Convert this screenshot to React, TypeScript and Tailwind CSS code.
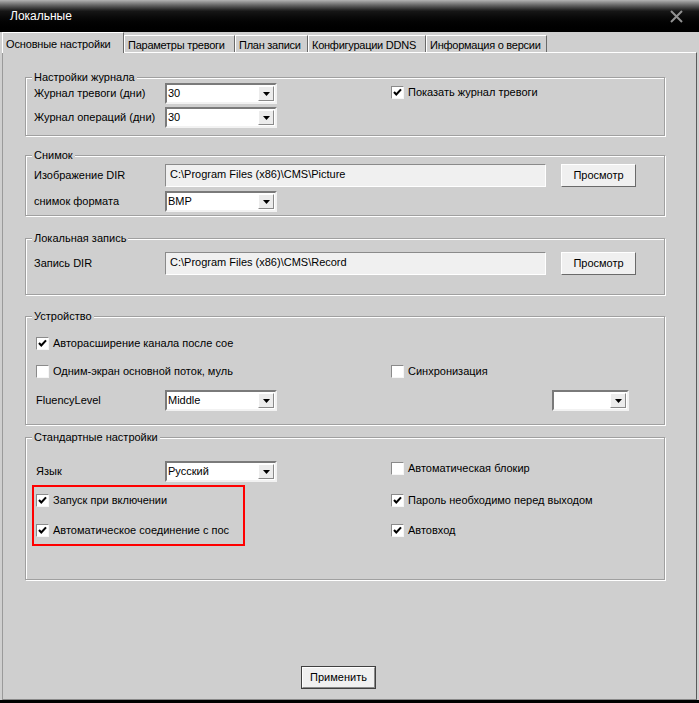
import React from 'react';

const ETCH = 'border border-[#a0a0a0] shadow-[1px_1px_0_#ffffff,inset_1px_1px_0_#ffffff]';

const Check = ({ checked, label }: { checked?: boolean; label: string }) => (
  <div className="flex items-center h-[20px]">
    <span className="w-[13px] h-[13px] shrink-0 bg-white border border-t-[#8a8a8a] border-l-[#8a8a8a] border-r-[#f6f6f6] border-b-[#f6f6f6] flex items-center justify-center">
      {checked && (
        <svg width="9" height="9" viewBox="0 0 9 9">
          <path d="M1 4 L3.3 6.5 L8 1.4" stroke="#000" strokeWidth="2.1" fill="none" />
        </svg>
      )}
    </span>
    <span className="ml-[4px] whitespace-nowrap">{label}</span>
  </div>
);

const Combo = ({ value, w = 'w-[112px]' }: { value?: string; w?: string }) => (
  <div className={`${w} h-[21px] bg-white border-2 border-t-[#7a7a7a] border-l-[#7a7a7a] border-r-[#f2f2f2] border-b-[#f2f2f2] flex items-center`}>
    <span className="flex-1 pl-[1px] text-black">{value}</span>
    <span className="w-[16px] h-[15px] mr-[1px] bg-[#ececec] border border-t-white border-l-white border-r-[#8a8a8a] border-b-[#8a8a8a] flex items-center justify-center">
      <svg width="7" height="4" viewBox="0 0 7 4">
        <path d="M0 0 H7 L3.5 4 Z" fill="#000" />
      </svg>
    </span>
  </div>
);

const PathBox = ({ value }: { value: string }) => (
  <div className="w-[381px] h-[23px] bg-[#f0f0f0] border border-t-[#8a8a8a] border-l-[#8a8a8a] border-r-white border-b-white flex items-center pl-[4px] pb-[3px]">
    {value}
  </div>
);

const Btn = ({ label }: { label: string }) => (
  <div className="w-[75px] h-[23px] bg-[#f0f0f0] border border-t-white border-l-white border-r-[#6a6a6a] border-b-[#6a6a6a] flex items-center justify-center">
    {label}
  </div>
);

const Group = ({ title, mt, pad, children }: { title: string; mt: string; pad: string; children: React.ReactNode }) => (
  <fieldset className={`w-[640px] ${ETCH} ${mt}`}>
    <legend className="ml-[6px] px-[2px] leading-[12px] bg-[#cfcfcf]">{title}</legend>
    <div className={pad}>{children}</div>
  </fieldset>
);

const tabs = [
  { label: 'Параметры тревоги', w: 'w-[111px]' },
  { label: 'План записи', w: 'w-[73px]' },
  { label: 'Конфигурации DDNS', w: 'w-[118px]' },
  { label: 'Информация о версии', w: 'w-[121px]' },
];

export default function App() {
  return (
    <div className="w-[699px] h-[703px] bg-black flex flex-col font-['Liberation_Sans',Arial,sans-serif] text-[11px] text-black">
      <div className="h-[32px] shrink-0 flex items-center justify-between pl-[10px] pr-[16px] bg-gradient-to-b from-[#b4b4b4] via-[#161616] via-35% to-black">
        <span className="text-white text-[12px]">Локальные</span>
        <svg width="13" height="13" viewBox="0 0 13 13">
          <path d="M1 1 L12 12 M12 1 L1 12" stroke="#929292" strokeWidth="2" />
        </svg>
      </div>

      <div className="h-[668px] bg-[#cfcfcf] px-[2px] flex flex-col">
        <div className="h-[20px] flex items-end">
          <div className="relative z-10 w-[122px] h-[21px] -mb-[1px] bg-[#cfcfcf] border-t border-l border-white border-r border-r-[#6a6a6a] pl-[3px] pt-[5px] leading-[12px] tracking-[-0.15px] whitespace-nowrap">
            Основные настройки
          </div>
          {tabs.map((t) => (
            <div
              key={t.label}
              className={`${t.w} h-[17px] bg-[#cfcfcf] border-t border-l border-white border-r border-r-[#6a6a6a] pl-[3px] pt-[3px] leading-[12px] tracking-[-0.25px] whitespace-nowrap`}
            >
              {t.label}
            </div>
          ))}
        </div>

        <div className="flex-1 border-t border-l border-t-white border-l-[#9a9a9a] border-r border-r-[#5a5a5a] border-b border-b-[#8a8a8a] pl-[22px] flex flex-col">
          <Group title="Настройки журнала" mt="mt-[18px]" pad="pl-[8px] pb-[7px]">
            <div className="flex">
              <div className="w-[357px] flex flex-col gap-[3px]">
                <div className="flex items-center">
                  <span className="w-[131px]">Журнал тревоги (дни)</span>
                  <Combo value="30" />
                </div>
                <div className="flex items-center">
                  <span className="w-[131px]">Журнал операций (дни)</span>
                  <Combo value="30" />
                </div>
              </div>
              <div className="-mt-[1px]">
                <Check checked label="Показать журнал тревоги" />
              </div>
            </div>
          </Group>

          <Group title="Снимок" mt="mt-[13px]" pad="pl-[8px] pt-[3px] pb-[3px]">
            <div className="flex items-center">
              <span className="w-[131px]">Изображение DIR</span>
              <PathBox value="C:\Program Files (x86)\CMS\Picture" />
              <div className="ml-[15px]">
                <Btn label="Просмотр" />
              </div>
            </div>
            <div className="flex items-center mt-[4px]">
              <span className="w-[131px]">снимок формата</span>
              <Combo value="BMP" />
            </div>
          </Group>

          <Group title="Локальная запись" mt="mt-[16px]" pad="pl-[8px] pt-[8px] pb-[19px]">
            <div className="flex items-center">
              <span className="w-[131px]">Запись DIR</span>
              <PathBox value="C:\Program Files (x86)\CMS\Record" />
              <div className="ml-[15px]">
                <Btn label="Просмотр" />
              </div>
            </div>
          </Group>

          <Group title="Устройство" mt="mt-[15px]" pad="pl-[10px] pt-[11px] pb-[13px]">
            <Check checked label="Авторасширение канала после сое" />
            <div className="flex mt-[8px]">
              <div className="w-[355px]">
                <Check label="Одним-экран основной поток, муль" />
              </div>
              <Check label="Синхронизация" />
            </div>
            <div className="flex items-center mt-[9px]">
              <span className="w-[129px]">FluencyLevel</span>
              <Combo value="Middle" />
              <div className="ml-[275px]">
                <Combo w="w-[77px]" />
              </div>
            </div>
          </Group>

          <Group title="Стандартные настройки" mt="mt-[6px]" pad="pl-[10px] pt-[18px] pb-[39px]">
            <div className="flex">
              <div className="w-[355px]">
                <div className="flex items-center">
                  <span className="w-[129px]">Язык</span>
                  <Combo value="Русский" />
                </div>
                <div className="relative mt-[8px]">
                  <Check checked label="Запуск при включении" />
                  <div className="mt-[10px]">
                    <Check checked label="Автоматическое соединение с пос" />
                  </div>
                  <div className="absolute -left-[4px] -top-[5px] w-[213px] h-[61px] border-2 border-[#ff0000]" />
                </div>
              </div>
              <div className="flex flex-col">
                <div className="-mt-[3px]">
                  <Check label="Автоматическая блокир" />
                </div>
                <div className="mt-[12px]">
                  <Check checked label="Пароль необходимо перед выходом" />
                </div>
                <div className="mt-[10px]">
                  <Check checked label="Автовход" />
                </div>
              </div>
            </div>
          </Group>

          <div className="mt-[86px] ml-[276px] w-[75px] h-[23px] border border-[#404040] bg-[#f0f0f0] flex">
            <div className="flex-1 border border-t-white border-l-white border-r-[#8a8a8a] border-b-[#8a8a8a] flex items-center justify-center">
              Применить
            </div>
          </div>
        </div>
      </div>
    </div>
  );
}
